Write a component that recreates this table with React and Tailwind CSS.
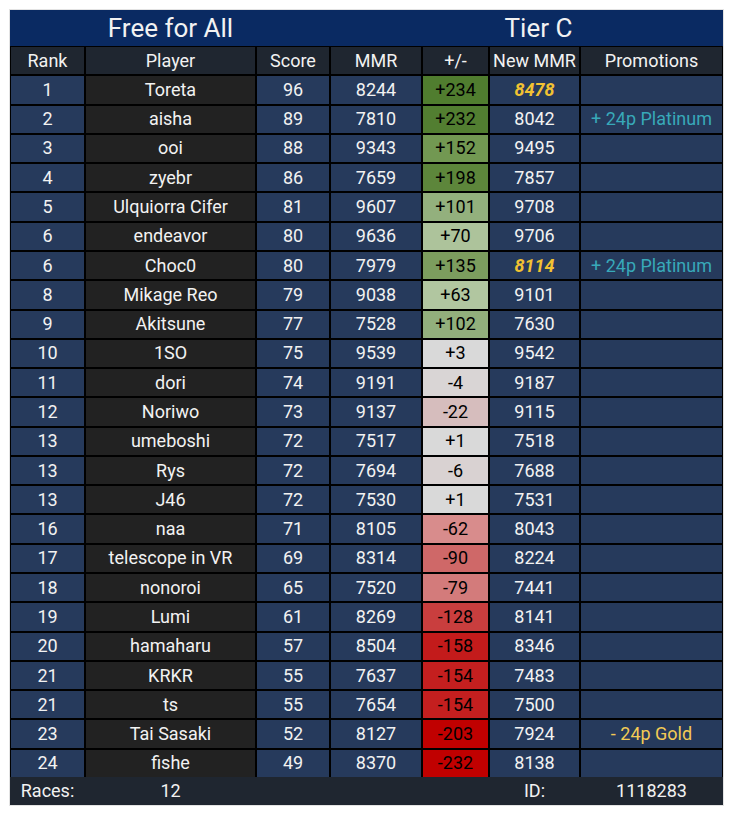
import React from "react";

const rows = [
  ["1", "Toreta", "96", "8244", "+234", "8478", "#507d2f", true, null],
  ["2", "aisha", "89", "7810", "+232", "8042", "#527e31", false, "plat"],
  ["3", "ooi", "88", "9343", "+152", "9495", "#729852", false, null],
  ["4", "zyebr", "86", "7659", "+198", "7857", "#5d863b", false, null],
  ["5", "Ulquiorra Cifer", "81", "9607", "+101", "9708", "#93b07d", false, null],
  ["6", "endeavor", "80", "9636", "+70", "9706", "#adc39b", false, null],
  ["6", "Choc0", "80", "7979", "+135", "8114", "#7c9d5e", true, "plat"],
  ["8", "Mikage Reo", "79", "9038", "+63", "9101", "#b1c6a0", false, null],
  ["9", "Akitsune", "77", "7528", "+102", "7630", "#92af7c", false, null],
  ["10", "1SO", "75", "9539", "+3", "9542", "#d9d9d9", false, null],
  ["11", "dori", "74", "9191", "-4", "9187", "#d9d5d5", false, null],
  ["12", "Noriwo", "73", "9137", "-22", "9115", "#d6bdbd", false, null],
  ["13", "umeboshi", "72", "7517", "+1", "7518", "#d9d9d9", false, null],
  ["13", "Rys", "72", "7694", "-6", "7688", "#d9d2d2", false, null],
  ["13", "J46", "72", "7530", "+1", "7531", "#d9d9d9", false, null],
  ["16", "naa", "71", "8105", "-62", "8043", "#d88c8c", false, null],
  ["17", "telescope in VR", "69", "8314", "-90", "8224", "#cf6868", false, null],
  ["18", "nonoroi", "65", "7520", "-79", "7441", "#d37b7b", false, null],
  ["19", "Lumi", "61", "8269", "-128", "8141", "#c93e3e", false, null],
  ["20", "hamaharu", "57", "8504", "-158", "8346", "#c31b1b", false, null],
  ["21", "KRKR", "55", "7637", "-154", "7483", "#c41f1f", false, null],
  ["21", "ts", "55", "7654", "-154", "7500", "#c41f1f", false, null],
  ["23", "Tai Sasaki", "52", "8127", "-203", "7924", "#c00000", false, "gold"],
  ["24", "fishe", "49", "8370", "-232", "8138", "#c00000", false, null],
];

const cols = "grid-cols-[73px_169px_72px_90px_65px_89px_141px]";
const blue = "bg-[#263a5c]";

export default function App() {
  return (
    <div
      className="w-[733px] h-[815px] bg-white pt-[10px] pl-[10px]"
      style={{ fontFamily: "Roboto, 'Noto Sans', sans-serif" }}
    >
      <div className="w-[713px] shadow-[0_0_0_1px_#e3e3e3] text-[#f2f2f2] text-[18px] leading-none">
        <div className={`grid ${cols} gap-x-[2px] px-px h-[36px] bg-[#0a2a62] items-center`}>
          <div className="col-start-2 text-center text-[26px]">Free for All</div>
          <div className="col-start-6 text-center text-[26px] pl-[8px] whitespace-nowrap">Tier C</div>
        </div>
        <div
          className={`grid ${cols} grid-rows-[repeat(25,minmax(0,1fr))] gap-[2px] bg-black px-px pt-px h-[731px]`}
        >
          {["Rank", "Player", "Score", "MMR", "+/-", "New MMR", "Promotions"].map((h) => (
            <div key={h} className="bg-[#1f2630] flex items-center justify-center whitespace-nowrap">
              {h}
            </div>
          ))}
          {rows.map((r, i) => (
            <React.Fragment key={i}>
              <div className={`${blue} flex items-center justify-center`}>{r[0]}</div>
              <div className="bg-[#222222] flex items-center justify-center whitespace-nowrap">{r[1]}</div>
              <div className={`${blue} flex items-center justify-center`}>{r[2]}</div>
              <div className={`${blue} flex items-center justify-center`}>{r[3]}</div>
              <div
                className="flex items-center justify-center text-black"
                style={{ backgroundColor: r[6] }}
              >
                {r[4]}
              </div>
              <div
                className={`${blue} flex items-center justify-center ${
                  r[7] ? "text-[#f1c232] font-bold italic" : ""
                }`}
              >
                {r[5]}
              </div>
              <div className={`${blue} flex items-center justify-center whitespace-nowrap`}>
                {r[8] === "plat" && <span className="text-[#38a9b9]">+ 24p Platinum</span>}
                {r[8] === "gold" && <span className="text-[#f3cb55]">- 24p Gold</span>}
              </div>
            </React.Fragment>
          ))}
        </div>
        <div className={`grid ${cols} gap-x-[2px] px-px h-[28px] bg-[#1f2630] items-center`}>
          <div className="text-center">Races:</div>
          <div className="text-center">12</div>
          <div className="col-start-6 text-center">ID:</div>
          <div className="text-center">1118283</div>
        </div>
      </div>
    </div>
  );
}
